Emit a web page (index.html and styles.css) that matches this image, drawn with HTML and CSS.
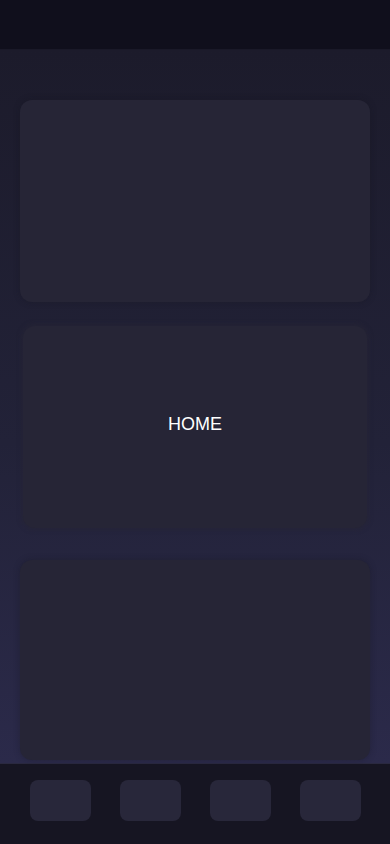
FILE: index.html
```html
<!DOCTYPE html>
<html lang="en">
<head>
    <meta charset="UTF-8">
    <meta name="viewport" content="width=device-width, initial-scale=1.0">
    <title>Home</title>
    <link rel="stylesheet" href="styles.css">
</head>
<body>
    <div class="app">
        <header class="topbar"></header>

        <main class="content">
            <div class="card card-first"></div>
            <div class="card card-middle">
                <span class="label">HOME</span>
            </div>
            <div class="card card-last"></div>
        </main>

        <nav class="tabbar">
            <div class="tab"></div>
            <div class="tab"></div>
            <div class="tab"></div>
            <div class="tab"></div>
        </nav>
    </div>
</body>
</html>
```

FILE: styles.css
```css
html, body {
    margin: 0;
    padding: 0;
    height: 100%;
}
body {
    font-family: 'Liberation Sans', Arial, sans-serif;
    background-color: #161522;
}
.app {
    display: flex;
    flex-direction: column;
    height: 844px;
}
.topbar {
    height: 50px;
    flex-shrink: 0;
    background-color: #100f1c;
    border-bottom: 1px solid #1a1928;
    box-sizing: border-box;
}
.content {
    flex: 1;
    display: flex;
    flex-direction: column;
    padding: 50px 20px 3px;
    background: linear-gradient(180deg, #1c1b2b 0%, #222238 55%, #2b2a4a 100%);
    border-bottom: 1px solid #2a2940;
}
.card {
    background-color: #262536;
    border-radius: 12px;
    box-shadow: 0 0 6px rgba(20, 20, 32, 0.35);
}
.card-first {
    height: 202px;
}
.card-middle {
    height: 202px;
    margin: 24px 3px 0;
    display: flex;
    align-items: center;
    justify-content: center;
    padding-bottom: 6px;
    box-sizing: border-box;
    box-shadow: 0 0 4px 2px rgba(38, 37, 54, 0.6);
}
.card-last {
    height: 200px;
    margin-top: 32px;
}
.label {
    color: #ffffff;
    font-size: 18px;
}
.tabbar {
    height: 80px;
    flex-shrink: 0;
    display: flex;
    justify-content: space-between;
    padding: 16px 29px 0 30px;
    box-sizing: border-box;
    background-color: #161522;
}
.tab {
    width: 61px;
    height: 41px;
    border-radius: 8px;
    background-color: #28273a;
}
```
